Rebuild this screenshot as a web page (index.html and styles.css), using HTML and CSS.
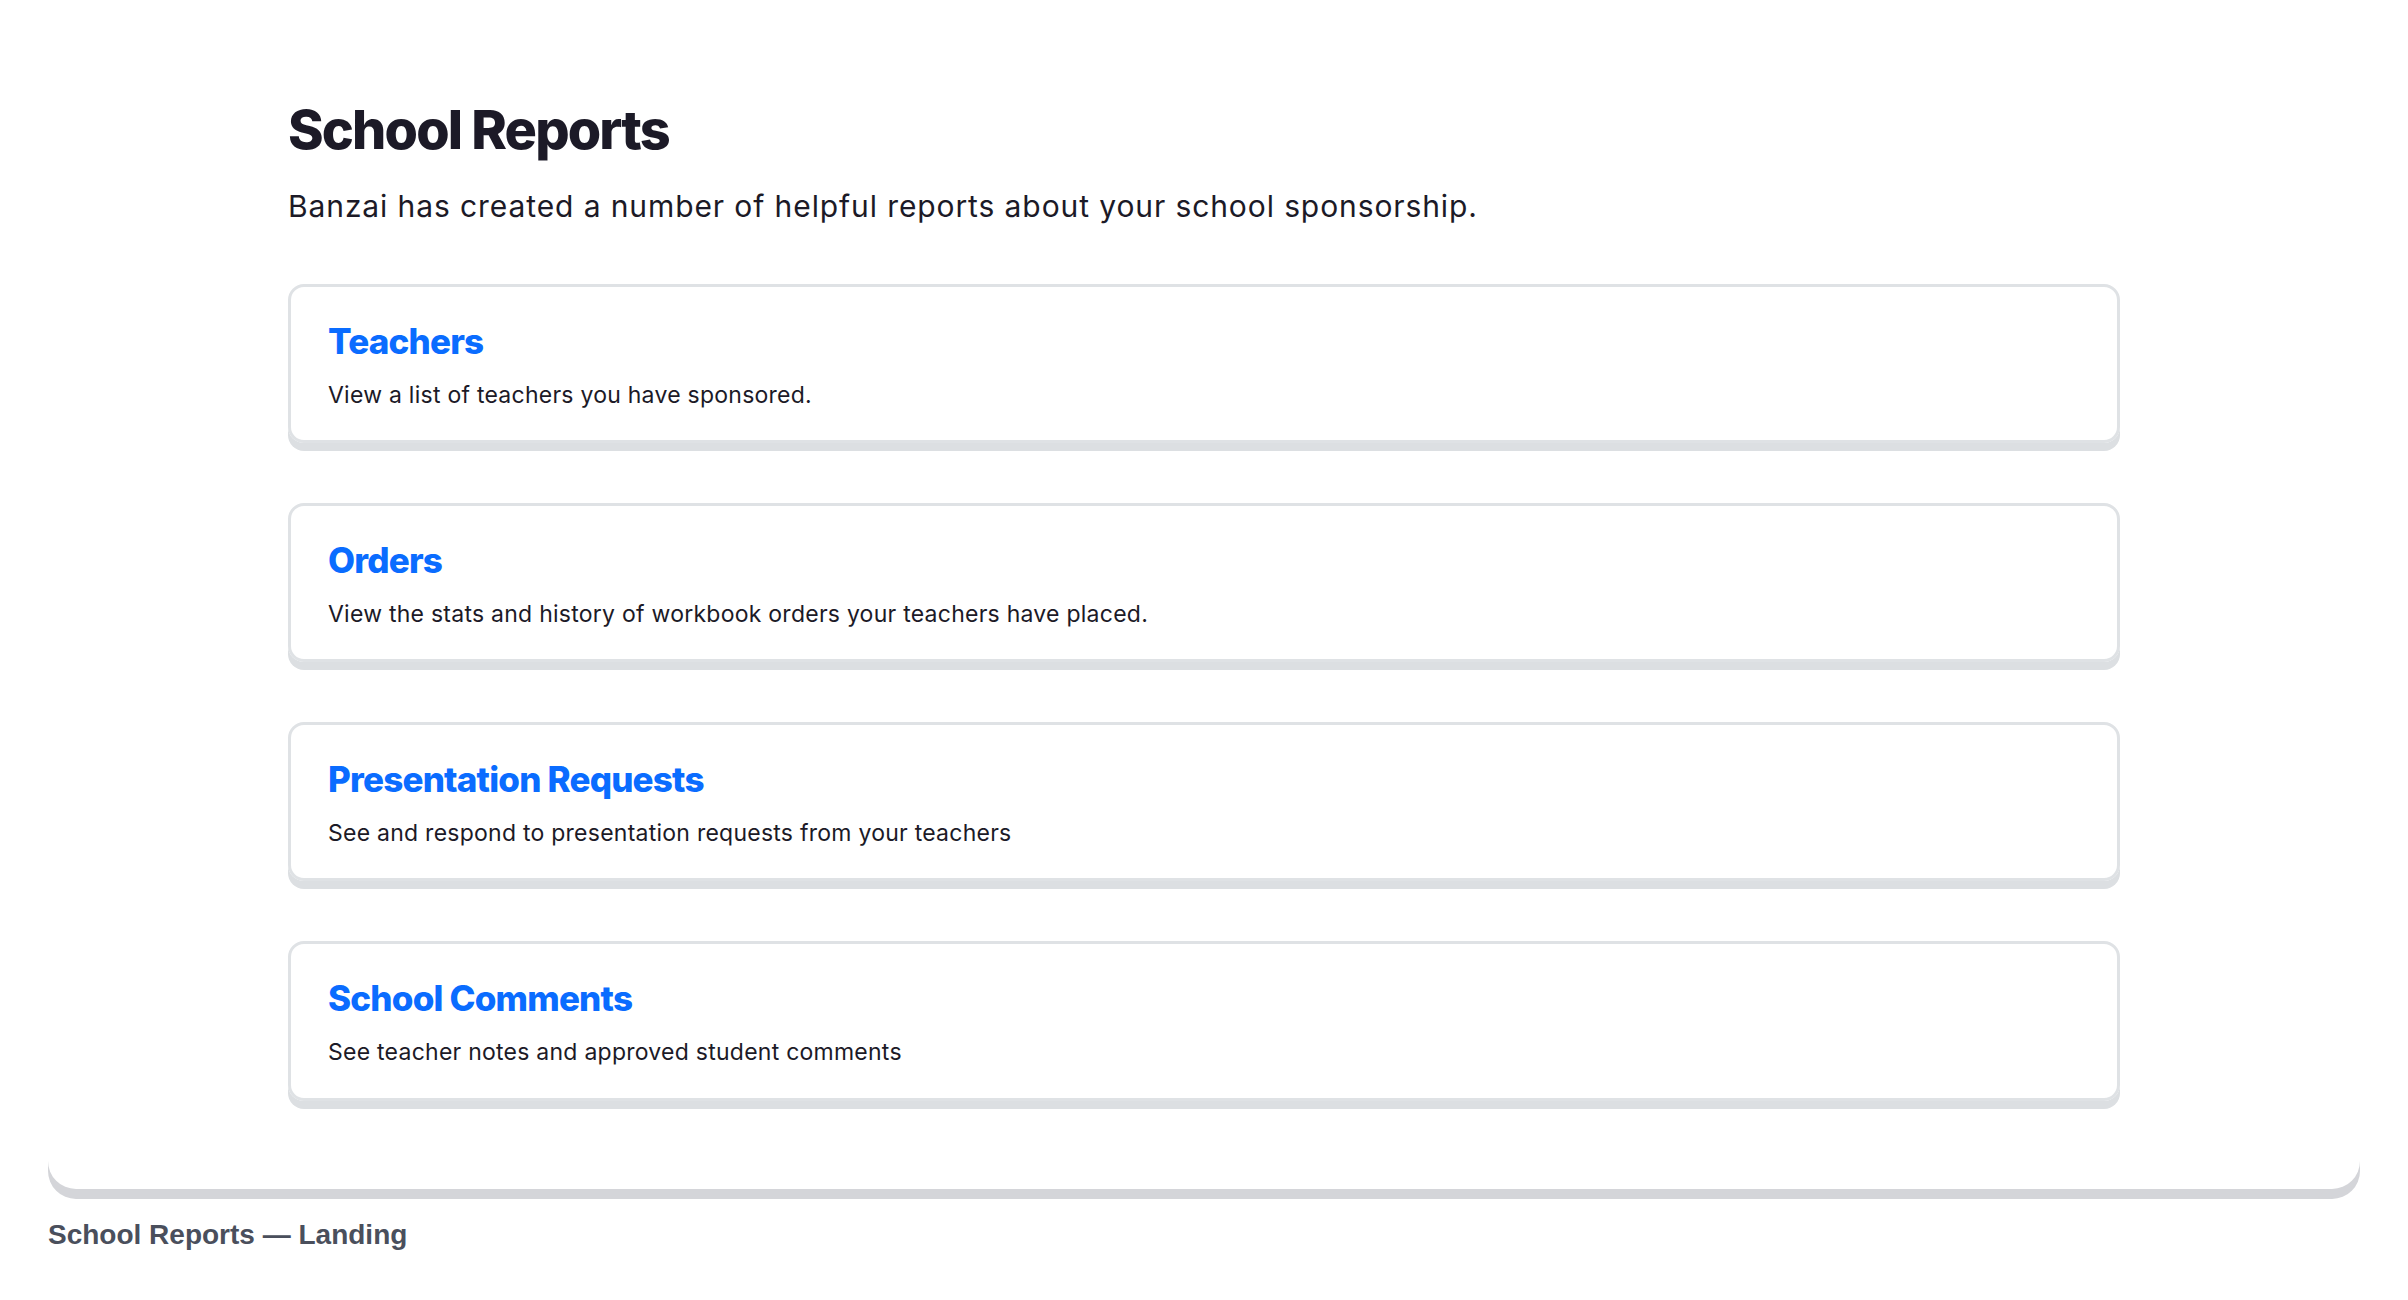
FILE: index.html
```html
<!DOCTYPE html>
<html>
  <head>
    <meta charset="utf-8" />
    <link rel="stylesheet" href="styles.css">
  </head>
  <body>
    <div class="frame">
      <div class="page">
        <h1 class="page-title">School Reports</h1>
        <p class="page-lead">
          Banzai has created a number of helpful reports about your school sponsorship.
        </p>

        <a class="report-card" href="#">
          <h2 class="report-title">Teachers</h2>
          <p class="report-text">View a list of teachers you have sponsored.</p>
        </a>

        <a class="report-card" href="#">
          <h2 class="report-title">Orders</h2>
          <p class="report-text">View the stats and history of workbook orders your teachers have placed.</p>
        </a>

        <a class="report-card" href="#">
          <h2 class="report-title">Presentation Requests</h2>
          <p class="report-text">See and respond to presentation requests from your teachers</p>
        </a>

        <a class="report-card" href="#">
          <h2 class="report-title">School Comments</h2>
          <p class="report-text">See teacher notes and approved student comments</p>
        </a>
      </div>
    </div>

    <div class="caption">School Reports — Landing</div>
  </body>
</html>
```

FILE: styles.css
```css
:root {
  --text-primary: #1c1a27;
  --text-muted: #4a4f5c;
  --link-color: #0a6cff;
  --border-color: #dfe2e5;
  --card-shadow: #dcdfe2;
  --frame-shadow: #d4d5d9;
}

body {
  margin: 0;
  padding: 0 48px;
  background: #ffffff;
  color: var(--text-primary);
  font-family: Inter, "Noto Sans", sans-serif;
}
.frame {
  background: #ffffff;
  border-radius: 0 0 28px 28px;
  box-shadow: 0 10px 0 var(--frame-shadow);
  padding: 98px 240px 88px;
}
.page-title {
  margin: 0;
  font-size: 54px;
  font-weight: 800;
  line-height: 1.2;
  letter-spacing: -0.034em;
}
.page-lead {
  margin: 22px 0 57px;
  font-size: 30px;
  line-height: 1.4;
  letter-spacing: 0.9px;
}
.report-card {
  display: block;
  margin-bottom: 60px;
  padding: 33px 37px 29px;
  border: 3px solid var(--border-color);
  border-radius: 16px;
  box-shadow: 0 8px 0 var(--card-shadow);
  color: var(--text-primary);
  text-decoration: none;
}
.report-card:last-child {
  margin-bottom: 0;
}
.report-title {
  margin: 0;
  font-size: 35px;
  font-weight: 800;
  line-height: 1.2;
  letter-spacing: -0.8px;
  color: var(--link-color);
}
.report-text {
  margin: 17px 0 0;
  font-size: 23px;
  line-height: 1.4;
  letter-spacing: 0.25px;
}
.caption {
  margin-top: 30px;
  font-family: "Liberation Sans", Arial, sans-serif;
  font-size: 28px;
  font-weight: bold;
  color: var(--text-muted);
}
```
